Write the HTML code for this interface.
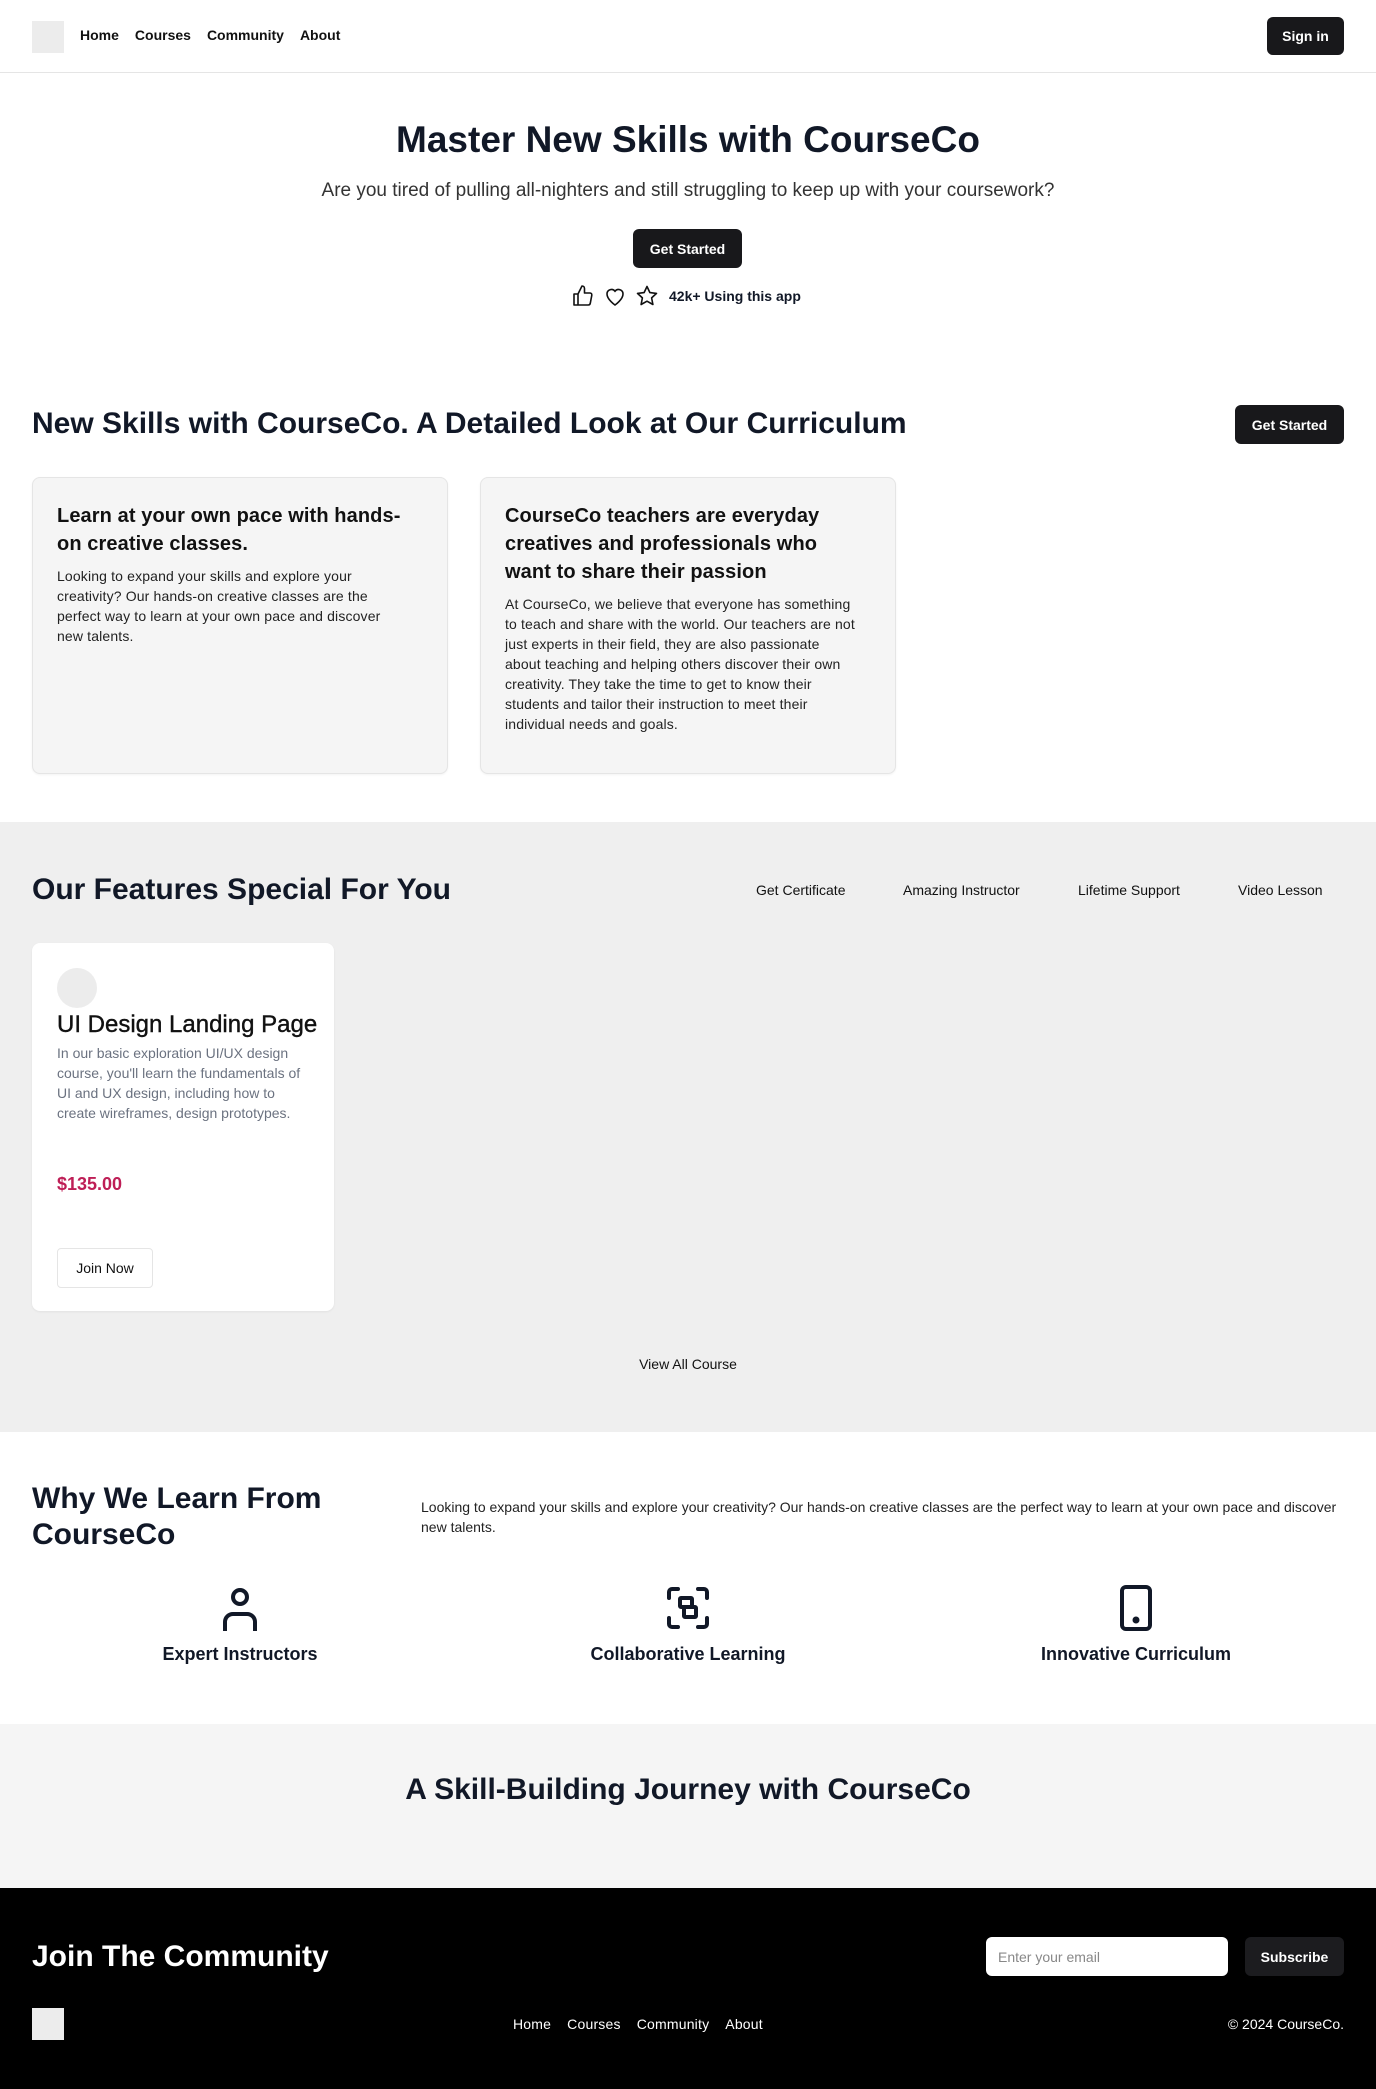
<!DOCTYPE html>
<html><head><meta charset="utf-8"><style>
*{box-sizing:border-box;margin:0;padding:0}
body{width:1376px;height:2089px;position:relative;font-family:"Liberation Sans",Arial,sans-serif;color:#111827;background:#fff;overflow:hidden}
.a{position:absolute}
.btn{position:absolute;background:#18181b;color:#fff;border-radius:6px;font-size:14px;font-weight:600;display:flex;align-items:center;justify-content:center}
.card{position:absolute;background:#f5f5f5;border:1px solid #e5e5e5;border-radius:8px;padding:24px 40px 24px 24px;box-shadow:0 1px 2px rgba(0,0,0,.05)}
.card h3{font-size:20px;font-weight:600;line-height:28px;margin-bottom:8px;color:#111;letter-spacing:0.1px}
.card p{font-size:14px;line-height:20px;color:#222;letter-spacing:0.15px}
.h2{font-size:30px;font-weight:700;color:#111827}
</style></head><body>
<!-- nav -->
<div class="a" style="left:0;top:0;width:1376px;height:73px;border-bottom:1px solid #e5e5e5"></div>
<div class="a" style="left:32px;top:21px;width:32px;height:32px;background:#ececec"></div>
<div class="a" style="left:80px;top:27px;font-size:14px;font-weight:700;display:flex;gap:16px;color:#111"><span>Home</span><span>Courses</span><span>Community</span><span>About</span></div>
<div class="btn" style="left:1267px;top:17px;width:77px;height:38px">Sign in</div>
<!-- hero -->
<div class="a" style="left:0;width:1376px;top:119px;text-align:center;font-size:37px;font-weight:700">Master New Skills with CourseCo</div>
<div class="a" style="left:0;width:1376px;top:180px;text-align:center;font-size:19px;color:#333">Are you tired of pulling all-nighters and still struggling to keep up with your coursework?</div>
<div class="btn" style="left:633px;top:229px;width:109px;height:39px">Get Started</div>
<div class="a" style="left:571px;top:284px;display:flex;align-items:center;gap:8px;font-size:14px;font-weight:700">
<svg width="24" height="24" viewBox="0 0 24 24" fill="none" stroke="#111" stroke-width="1.6" stroke-linejoin="round"><path d="M7 10v11H3V10h4zM7 10l4-8c1.5 0 2.5 1 2.5 2.5V9h5.5c1.2 0 2 1 1.8 2.2l-1.5 8c-.2 1-1 1.8-2 1.8H7"/></svg>
<svg width="24" height="24" viewBox="0 0 24 24" fill="none" stroke="#111" stroke-width="1.6"><path d="M12 21s-8-5.5-8-11a4.5 4.5 0 0 1 8-2.8A4.5 4.5 0 0 1 20 10c0 5.5-8 11-8 11z"/></svg>
<svg width="24" height="24" viewBox="0 0 24 24" fill="none" stroke="#111" stroke-width="1.6" stroke-linejoin="round"><path d="M12 2.5l2.9 6.1 6.6.8-4.9 4.5 1.3 6.6L12 17.2l-5.9 3.3 1.3-6.6-4.9-4.5 6.6-.8z"/></svg>
<span style="margin-left:2px">42k+ Using this app</span></div>
<!-- section 2 -->
<div class="a h2" style="left:32px;top:407px">New Skills with CourseCo. A Detailed Look at Our Curriculum</div>
<div class="btn" style="left:1235px;top:405px;width:109px;height:39px">Get Started</div>
<div class="card" style="left:32px;top:477px;width:416px;height:297px"><h3>Learn at your own pace with hands-on creative classes.</h3><p>Looking to expand your skills and explore your creativity? Our hands-on creative classes are the perfect way to learn at your own pace and discover new talents.</p></div>
<div class="card" style="left:480px;top:477px;width:416px;height:297px"><h3>CourseCo teachers are everyday creatives and professionals who want to share their passion</h3><p>At CourseCo, we believe that everyone has something to teach and share with the world. Our teachers are not just experts in their field, they are also passionate about teaching and helping others discover their own creativity. They take the time to get to know their students and tailor their instruction to meet their individual needs and goals.</p></div>
<!-- features -->
<div class="a" style="left:0;top:822px;width:1376px;height:610px;background:#efefef"></div>
<div class="a h2" style="left:32px;top:873px">Our Features Special For You</div>
<div class="a" style="left:756px;top:882px;font-size:14px;font-weight:500;color:#111"><span>Get Certificate</span><span style="position:absolute;left:147px;white-space:nowrap">Amazing Instructor</span><span style="position:absolute;left:322px;white-space:nowrap">Lifetime Support</span><span style="position:absolute;left:482px;white-space:nowrap">Video Lesson</span></div>
<div class="a" style="left:32px;top:943px;width:302px;height:368px;background:#fff;border-radius:8px;box-shadow:0 1px 2px rgba(0,0,0,.06)"></div>
<div class="a" style="left:57px;top:968px;width:40px;height:40px;border-radius:50%;background:#ececec"></div>
<div class="a" style="left:57px;top:1011px;font-size:24px;font-weight:500;color:#111;white-space:nowrap;-webkit-text-stroke:0.4px #111">UI Design Landing Page</div>
<div class="a" style="left:57px;top:1043px;width:260px;font-size:14px;line-height:20px;color:#6b7280">In our basic exploration UI/UX design course, you'll learn the fundamentals of UI and UX design, including how to create wireframes, design prototypes.</div>
<div class="a" style="left:57px;top:1174px;font-size:18px;font-weight:700;color:#be1e56">$135.00</div>
<div class="a" style="left:57px;top:1248px;width:96px;height:40px;border:1px solid #e5e5e5;border-radius:4px;background:#fff;font-size:14px;display:flex;align-items:center;justify-content:center;color:#111">Join Now</div>
<div class="a" style="left:0;width:1376px;top:1356px;text-align:center;font-size:14px;color:#111">View All Course</div>
<!-- why -->
<div class="a h2" style="left:32px;top:1481px;line-height:36px;width:340px">Why We Learn From CourseCo</div>
<div class="a" style="left:421px;top:1497px;width:930px;font-size:14px;line-height:20px;color:#222">Looking to expand your skills and explore your creativity? Our hands-on creative classes are the perfect way to learn at your own pace and discover new talents.</div>
<svg class="a" style="left:218px;top:1586px" width="44" height="46" viewBox="0 0 44 46" fill="none" stroke="#111827" stroke-width="4"><circle cx="22" cy="11" r="7"/><path d="M7 45V36a8 8 0 0 1 8-8h14a8 8 0 0 1 8 8v9"/></svg>
<svg class="a" style="left:666px;top:1586px" width="44" height="44" viewBox="0 0 44 44" fill="none" stroke="#111827" stroke-width="4" stroke-linecap="round"><path d="M12 3H6a3 3 0 0 0-3 3v6M32 3h6a3 3 0 0 1 3 3v6M12 41H6a3 3 0 0 1-3-3v-6M32 41h6a3 3 0 0 0 3-3v-6"/><rect x="14" y="12" width="12" height="9" rx="1"/><rect x="18" y="21" width="12" height="10" rx="1"/></svg>
<svg class="a" style="left:1118px;top:1584px" width="36" height="48" viewBox="0 0 36 48" fill="none" stroke="#111827" stroke-width="4"><rect x="4" y="3" width="28" height="42" rx="4"/><circle cx="18" cy="36" r="1.5" fill="#111827"/></svg>
<div class="a" style="left:40px;width:400px;top:1644px;text-align:center;font-size:18px;font-weight:700">Expert Instructors</div>
<div class="a" style="left:488px;width:400px;top:1644px;text-align:center;font-size:18px;font-weight:700">Collaborative Learning</div>
<div class="a" style="left:936px;width:400px;top:1644px;text-align:center;font-size:18px;font-weight:700">Innovative Curriculum</div>
<!-- journey -->
<div class="a" style="left:0;top:1724px;width:1376px;height:164px;background:#f5f5f5"></div>
<div class="a" style="left:0;width:1376px;top:1773px;text-align:center;font-size:30px;font-weight:700">A Skill-Building Journey with CourseCo</div>
<!-- footer -->
<div class="a" style="left:0;top:1888px;width:1376px;height:201px;background:#000"></div>
<div class="a" style="left:32px;top:1940px;font-size:30px;font-weight:700;color:#fff">Join The Community</div>
<div class="a" style="left:986px;top:1937px;width:242px;height:39px;background:#fff;border-radius:6px;font-size:14px;color:#888;padding:12px 12px">Enter your email</div>
<div class="btn" style="left:1245px;top:1937px;width:99px;height:39px;background:#1c1c1f">Subscribe</div>
<div class="a" style="left:32px;top:2008px;width:32px;height:32px;background:#ececec"></div>
<div class="a" style="left:513px;top:2016px;font-size:14px;color:#fff;display:flex;gap:16px;letter-spacing:0.2px"><span>Home</span><span>Courses</span><span>Community</span><span>About</span></div>
<div class="a" style="right:32px;top:2016px;font-size:14px;color:#fff">© 2024 CourseCo.</div>
</body></html>
